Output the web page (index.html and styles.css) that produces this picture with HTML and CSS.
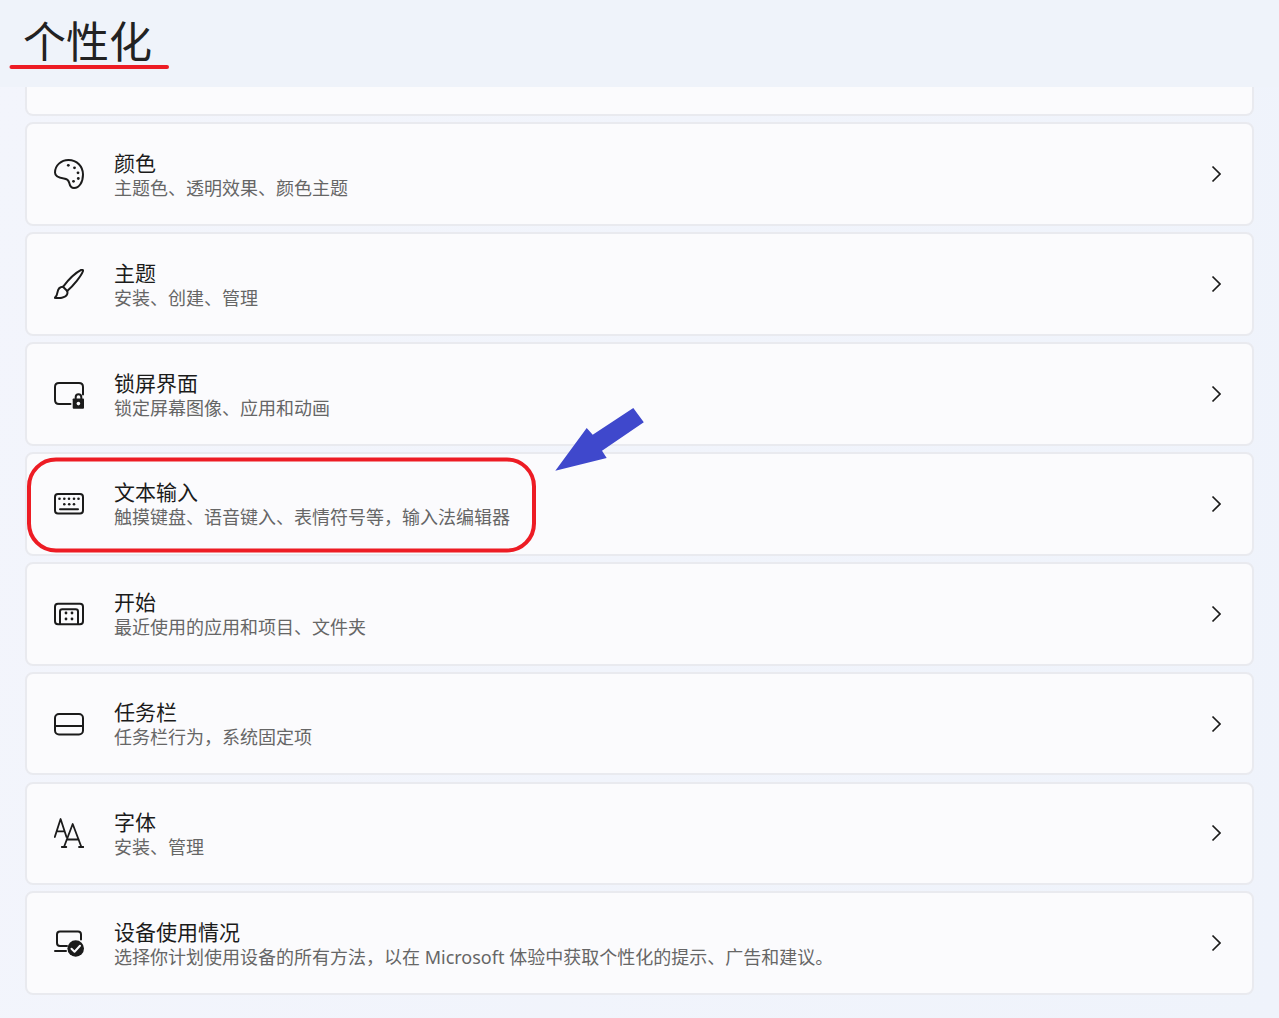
FILE: index.html
```html
<!DOCTYPE html>
<html lang="zh-CN">
<head>
<meta charset="utf-8">
<title>个性化</title>
<link rel="stylesheet" href="styles.css">
</head>
<body>
<div class="page">
  <header class="header"><h1 class="heading">个性化</h1></header>
  <main class="list">
    <div class="card card-cut"></div>

    <section class="card">
      <svg class="icon" viewBox="0 0 30 30"><path d="M14.500 1C23 1 29 7.400 29 15.500 29 23.500 25 29 20 29c-3.300 0-4.200-2.600-4.800-5.300-.7-2.900-2-3.900-5.400-4.300C4.800 18.800 1 17.300 1 13.500 1 6.500 7 1 14.500 1Z"/><g class="fill"><circle cx="14.300" cy="6.300" r="1.400"/><circle cx="20.500" cy="8.800" r="1.400"/><circle cx="24" cy="13.800" r="1.400"/><circle cx="24.300" cy="19.500" r="1.400"/><circle cx="19.500" cy="22.300" r="1.400"/></g></svg>
      <div class="text"><div class="title">颜色</div><div class="sub">主题色、透明效果、颜色主题</div></div>
      <svg class="chev" viewBox="0 0 10 18"><path d="M1.500 1.500 9 9 1.500 16.500"/></svg>
    </section>

    <section class="card">
      <svg class="icon" viewBox="0 0 30 30"><path d="M27.300.8c1.200-.5 2 .3 1.600 1.500C27.300 6.800 20 16 13.200 22L9 17.800C14.500 10.500 22.500 3.200 27.300.8Z"/><path d="M9 17.800c-3.800.2-5 2.600-5.400 5C3.200 25.500 2.500 27.500.8 28.800c4.200.6 10.600.2 12.200-3.200.6-1.300.6-2.400.2-3.600"/></svg>
      <div class="text"><div class="title">主题</div><div class="sub">安装、创建、管理</div></div>
      <svg class="chev" viewBox="0 0 10 18"><path d="M1.500 1.500 9 9 1.500 16.500"/></svg>
    </section>

    <section class="card">
      <svg class="icon" viewBox="0 0 30 30"><path d="M16.500 25H5c-2.400 0-4-1.600-4-4V8c0-2.400 1.600-4 4-4h20c2.400 0 4 1.600 4 4v7.500"/><path class="fill" d="M19.500 19.500h9.700a.8.8 0 0 1 .8.800v8.500a1 1 0 0 1-1 1h-9.300a1 1 0 0 1-1-1v-8.500a.8.800 0 0 1 .8-.800Z"/><path d="M21.700 19.500V18a2.800 2.800 0 0 1 5.600 0v1.500"/><circle class="cut" cx="24.400" cy="24.600" r="1.800"/></svg>
      <div class="text"><div class="title">锁屏界面</div><div class="sub">锁定屏幕图像、应用和动画</div></div>
      <svg class="chev" viewBox="0 0 10 18"><path d="M1.500 1.500 9 9 1.500 16.500"/></svg>
    </section>

    <section class="card">
      <svg class="icon" viewBox="0 0 30 30"><rect x="1" y="5" width="28" height="19.500" rx="3"/><g class="fill"><circle cx="5.500" cy="9.700" r="1.300"/><circle cx="10.300" cy="9.700" r="1.300"/><circle cx="15" cy="9.700" r="1.300"/><circle cx="20" cy="9.700" r="1.300"/><circle cx="24.500" cy="9.700" r="1.300"/><circle cx="10.300" cy="15.200" r="1.300"/><circle cx="15.200" cy="15.200" r="1.300"/><circle cx="20" cy="15.200" r="1.300"/></g><path d="M6 20.300h18"/></svg>
      <div class="text"><div class="title">文本输入</div><div class="sub">触摸键盘、语音键入、表情符号等，输入法编辑器</div></div>
      <svg class="chev" viewBox="0 0 10 18"><path d="M1.500 1.500 9 9 1.500 16.500"/></svg>
    </section>

    <section class="card">
      <svg class="icon" viewBox="0 0 30 30"><rect x="1" y="4.700" width="28" height="20.600" rx="3"/><path d="M6 25V12.500c0-1.400 1-2.300 2.300-2.300h13.400c1.300 0 2.300.9 2.300 2.300V25"/><g class="fill"><circle cx="12" cy="14" r="1.400"/><circle cx="18" cy="14" r="1.400"/><circle cx="12" cy="20" r="1.400"/><circle cx="18" cy="20" r="1.400"/></g></svg>
      <div class="text"><div class="title">开始</div><div class="sub">最近使用的应用和项目、文件夹</div></div>
      <svg class="chev" viewBox="0 0 10 18"><path d="M1.500 1.500 9 9 1.500 16.500"/></svg>
    </section>

    <section class="card">
      <svg class="icon" viewBox="0 0 30 30"><rect x="1" y="5" width="28" height="20.500" rx="4"/><path d="M1 17h28"/></svg>
      <div class="text"><div class="title">任务栏</div><div class="sub">任务栏行为，系统固定项</div></div>
      <svg class="chev" viewBox="0 0 10 18"><path d="M1.500 1.500 9 9 1.500 16.500"/></svg>
    </section>

    <section class="card">
      <svg class="icon icon-thin" viewBox="0 0 30 30"><path d="M.8 19 6.600 1 12.500 19M2.800 13.300h7.600"/><path d="M10 29 18.700 6 27.400 29M12.700 21.500h12M7.800 29h4.500M25 29h4.500"/></svg>
      <div class="text"><div class="title">字体</div><div class="sub">安装、管理</div></div>
      <svg class="chev" viewBox="0 0 10 18"><path d="M1.500 1.500 9 9 1.500 16.500"/></svg>
    </section>

    <section class="card">
      <svg class="icon" viewBox="0 0 30 30"><path d="M13 18H6c-1.800 0-3-1.200-3-3V6.500c0-1.800 1.200-3 3-3h18c1.800 0 3 1.200 3 3v5"/><path d="M1 23h11"/><circle class="fill" cx="21.700" cy="20.500" r="8.300"/><path class="tick" d="M17.500 20.700l3 3 5.500-6"/></svg>
      <div class="text"><div class="title">设备使用情况</div><div class="sub">选择你计划使用设备的所有方法，以在 Microsoft 体验中获取个性化的提示、广告和建议。</div></div>
      <svg class="chev" viewBox="0 0 10 18"><path d="M1.500 1.500 9 9 1.500 16.500"/></svg>
    </section>
  </main>

  <svg class="marks" viewBox="0 0 1279 1018">
    <path class="mark-line" d="M11.500 67H167"/>
    <rect class="mark-box" x="29" y="459.500" width="505" height="91" rx="27"/>
    <polygon class="mark-arrow" points="555.300,470.700 586.700,428 592.700,434.700 633.300,408 643.800,422.300 602,450.700 606.700,458"/>
  </svg>
</div>
</body>
</html>
```

FILE: styles.css
```css
* { box-sizing: border-box; }
html, body { margin: 0; padding: 0; }
body {
  font-family: "Noto Sans", "Noto Sans CJK SC", sans-serif;
  color: #1b1b1b;
  overflow: hidden;
}
.page {
  position: relative;
  width: 1279px;
  height: 1018px;
  background: linear-gradient(100deg, #f3f5fc 0%, #eff3fb 100%);
  overflow: hidden;
}
.header {
  height: 87px;
  padding: 9px 0 0 23px;
  background: #eff3fa;
}
.heading {
  margin: 0;
  font-family: "Noto Sans CJK SC", sans-serif;
  font-size: 43px;
  line-height: 60px;
  font-weight: 400;
  color: #222;
}
.list {
  display: flex;
  flex-direction: column;
  gap: 6.060px;
  padding: 0 25px;
}
.card {
  display: flex;
  align-items: center;
  height: 103.800px;
  padding: 0 31px 0 27px;
  background: #fbfbfd;
  border: 2px solid #e9eaef;
  border-radius: 8px;
}
.card-cut {
  height: 29.400px;
  border-top: 0;
  border-top-left-radius: 0;
  border-top-right-radius: 0;
}
.icon {
  flex: none;
  width: 30px;
  height: 30px;
  fill: none;
  stroke: #1b1b1b;
  stroke-width: 2;
  stroke-linecap: round;
  stroke-linejoin: round;
}
.icon-thin { stroke-width: 1.800; }
.icon .fill { fill: #1b1b1b; stroke: none; }
.icon .cut { fill: #fbfbfd; stroke: none; }
.icon .tick { stroke: #fbfbfd; stroke-width: 2; }
.text {
  flex: 1;
  margin-left: 30px;
  padding-top: 3px;
}
.title {
  font-size: 21px;
  line-height: 25px;
  color: #1b1b1b;
}
.sub {
  font-size: 18px;
  line-height: 25px;
  color: #666;
}
.chev {
  flex: none;
  width: 10px;
  height: 18px;
  fill: none;
  stroke: #1b1b1b;
  stroke-width: 1.700;
}
.marks {
  position: absolute;
  left: 0;
  top: 0;
  width: 1279px;
  height: 1018px;
  pointer-events: none;
}
.mark-line { fill: none; stroke: #ed1c24; stroke-width: 4; stroke-linecap: round; }
.mark-box { fill: none; stroke: #ed1c24; stroke-width: 4; }
.mark-arrow { fill: #3f48cc; }
```
